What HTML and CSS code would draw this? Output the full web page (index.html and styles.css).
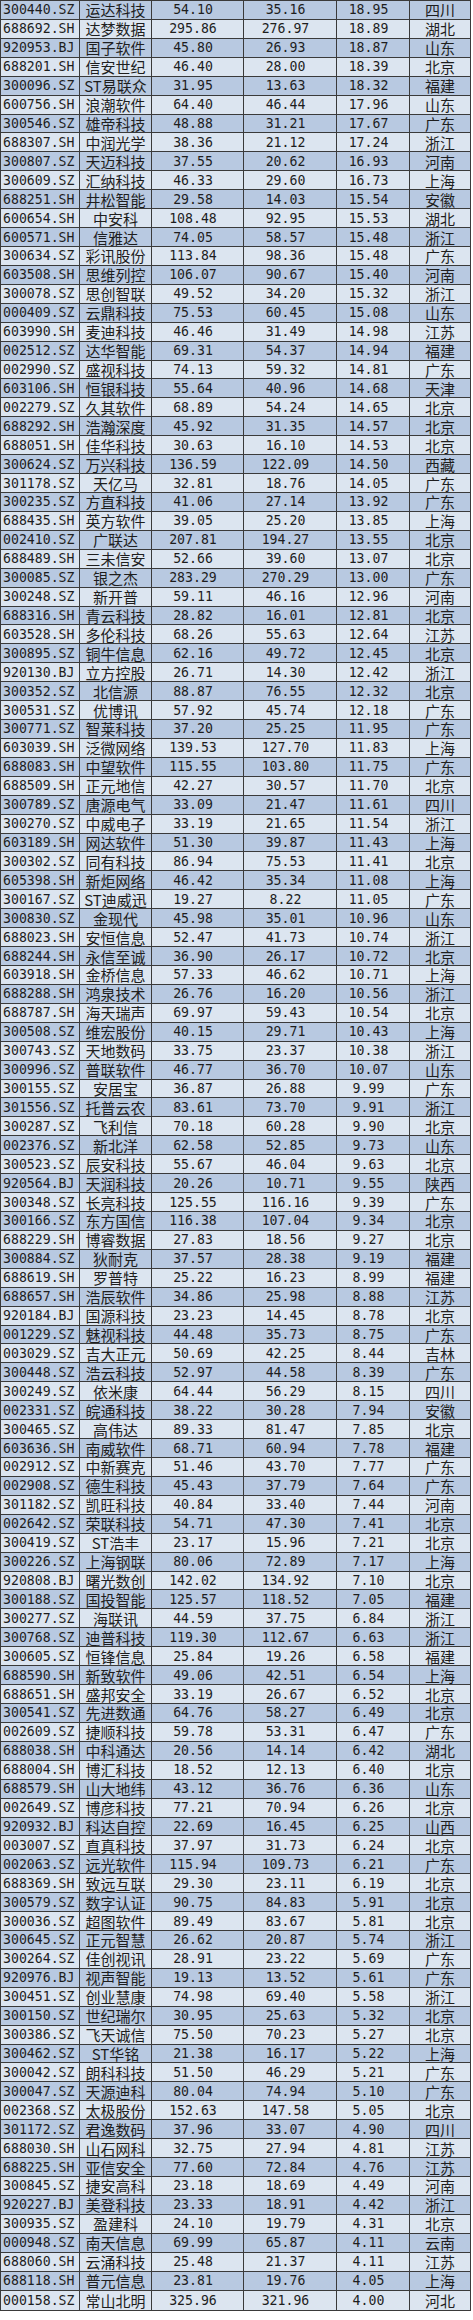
FILE: index.html
```html
<!DOCTYPE html>
<html lang="zh-CN">
<head>
<meta charset="utf-8">
<title>股票列表</title>
<link rel="stylesheet" href="styles.css">
</head>
<body>
<table class="sheet">
<colgroup>
<col class="c-code"><col class="c-name"><col class="c-a"><col class="c-b"><col class="c-c"><col class="c-prov">
</colgroup>
<tbody>
<tr><td class="code">300440.SZ</td><td class="name">运达科技</td><td class="num">54.10</td><td class="num">35.16</td><td class="num">18.95</td><td class="prov">四川</td></tr>
<tr><td class="code">688692.SH</td><td class="name">达梦数据</td><td class="num">295.86</td><td class="num">276.97</td><td class="num">18.89</td><td class="prov">湖北</td></tr>
<tr><td class="code">920953.BJ</td><td class="name">国子软件</td><td class="num">45.80</td><td class="num">26.93</td><td class="num">18.87</td><td class="prov">山东</td></tr>
<tr><td class="code">688201.SH</td><td class="name">信安世纪</td><td class="num">46.40</td><td class="num">28.00</td><td class="num">18.39</td><td class="prov">北京</td></tr>
<tr><td class="code">300096.SZ</td><td class="name">ST易联众</td><td class="num">31.95</td><td class="num">13.63</td><td class="num">18.32</td><td class="prov">福建</td></tr>
<tr><td class="code">600756.SH</td><td class="name">浪潮软件</td><td class="num">64.40</td><td class="num">46.44</td><td class="num">17.96</td><td class="prov">山东</td></tr>
<tr><td class="code">300546.SZ</td><td class="name">雄帝科技</td><td class="num">48.88</td><td class="num">31.21</td><td class="num">17.67</td><td class="prov">广东</td></tr>
<tr><td class="code">688307.SH</td><td class="name">中润光学</td><td class="num">38.36</td><td class="num">21.12</td><td class="num">17.24</td><td class="prov">浙江</td></tr>
<tr><td class="code">300807.SZ</td><td class="name">天迈科技</td><td class="num">37.55</td><td class="num">20.62</td><td class="num">16.93</td><td class="prov">河南</td></tr>
<tr><td class="code">300609.SZ</td><td class="name">汇纳科技</td><td class="num">46.33</td><td class="num">29.60</td><td class="num">16.73</td><td class="prov">上海</td></tr>
<tr><td class="code">688251.SH</td><td class="name">井松智能</td><td class="num">29.58</td><td class="num">14.03</td><td class="num">15.54</td><td class="prov">安徽</td></tr>
<tr><td class="code">600654.SH</td><td class="name">中安科</td><td class="num">108.48</td><td class="num">92.95</td><td class="num">15.53</td><td class="prov">湖北</td></tr>
<tr><td class="code">600571.SH</td><td class="name">信雅达</td><td class="num">74.05</td><td class="num">58.57</td><td class="num">15.48</td><td class="prov">浙江</td></tr>
<tr><td class="code">300634.SZ</td><td class="name">彩讯股份</td><td class="num">113.84</td><td class="num">98.36</td><td class="num">15.48</td><td class="prov">广东</td></tr>
<tr><td class="code">603508.SH</td><td class="name">思维列控</td><td class="num">106.07</td><td class="num">90.67</td><td class="num">15.40</td><td class="prov">河南</td></tr>
<tr><td class="code">300078.SZ</td><td class="name">思创智联</td><td class="num">49.52</td><td class="num">34.20</td><td class="num">15.32</td><td class="prov">浙江</td></tr>
<tr><td class="code">000409.SZ</td><td class="name">云鼎科技</td><td class="num">75.53</td><td class="num">60.45</td><td class="num">15.08</td><td class="prov">山东</td></tr>
<tr><td class="code">603990.SH</td><td class="name">麦迪科技</td><td class="num">46.46</td><td class="num">31.49</td><td class="num">14.98</td><td class="prov">江苏</td></tr>
<tr><td class="code">002512.SZ</td><td class="name">达华智能</td><td class="num">69.31</td><td class="num">54.37</td><td class="num">14.94</td><td class="prov">福建</td></tr>
<tr><td class="code">002990.SZ</td><td class="name">盛视科技</td><td class="num">74.13</td><td class="num">59.32</td><td class="num">14.81</td><td class="prov">广东</td></tr>
<tr><td class="code">603106.SH</td><td class="name">恒银科技</td><td class="num">55.64</td><td class="num">40.96</td><td class="num">14.68</td><td class="prov">天津</td></tr>
<tr><td class="code">002279.SZ</td><td class="name">久其软件</td><td class="num">68.89</td><td class="num">54.24</td><td class="num">14.65</td><td class="prov">北京</td></tr>
<tr><td class="code">688292.SH</td><td class="name">浩瀚深度</td><td class="num">45.92</td><td class="num">31.35</td><td class="num">14.57</td><td class="prov">北京</td></tr>
<tr><td class="code">688051.SH</td><td class="name">佳华科技</td><td class="num">30.63</td><td class="num">16.10</td><td class="num">14.53</td><td class="prov">北京</td></tr>
<tr><td class="code">300624.SZ</td><td class="name">万兴科技</td><td class="num">136.59</td><td class="num">122.09</td><td class="num">14.50</td><td class="prov">西藏</td></tr>
<tr><td class="code">301178.SZ</td><td class="name">天亿马</td><td class="num">32.81</td><td class="num">18.76</td><td class="num">14.05</td><td class="prov">广东</td></tr>
<tr><td class="code">300235.SZ</td><td class="name">方直科技</td><td class="num">41.06</td><td class="num">27.14</td><td class="num">13.92</td><td class="prov">广东</td></tr>
<tr><td class="code">688435.SH</td><td class="name">英方软件</td><td class="num">39.05</td><td class="num">25.20</td><td class="num">13.85</td><td class="prov">上海</td></tr>
<tr><td class="code">002410.SZ</td><td class="name">广联达</td><td class="num">207.81</td><td class="num">194.27</td><td class="num">13.55</td><td class="prov">北京</td></tr>
<tr><td class="code">688489.SH</td><td class="name">三未信安</td><td class="num">52.66</td><td class="num">39.60</td><td class="num">13.07</td><td class="prov">北京</td></tr>
<tr><td class="code">300085.SZ</td><td class="name">银之杰</td><td class="num">283.29</td><td class="num">270.29</td><td class="num">13.00</td><td class="prov">广东</td></tr>
<tr><td class="code">300248.SZ</td><td class="name">新开普</td><td class="num">59.11</td><td class="num">46.16</td><td class="num">12.96</td><td class="prov">河南</td></tr>
<tr><td class="code">688316.SH</td><td class="name">青云科技</td><td class="num">28.82</td><td class="num">16.01</td><td class="num">12.81</td><td class="prov">北京</td></tr>
<tr><td class="code">603528.SH</td><td class="name">多伦科技</td><td class="num">68.26</td><td class="num">55.63</td><td class="num">12.64</td><td class="prov">江苏</td></tr>
<tr><td class="code">300895.SZ</td><td class="name">铜牛信息</td><td class="num">62.16</td><td class="num">49.72</td><td class="num">12.45</td><td class="prov">北京</td></tr>
<tr><td class="code">920130.BJ</td><td class="name">立方控股</td><td class="num">26.71</td><td class="num">14.30</td><td class="num">12.42</td><td class="prov">浙江</td></tr>
<tr><td class="code">300352.SZ</td><td class="name">北信源</td><td class="num">88.87</td><td class="num">76.55</td><td class="num">12.32</td><td class="prov">北京</td></tr>
<tr><td class="code">300531.SZ</td><td class="name">优博讯</td><td class="num">57.92</td><td class="num">45.74</td><td class="num">12.18</td><td class="prov">广东</td></tr>
<tr><td class="code">300771.SZ</td><td class="name">智莱科技</td><td class="num">37.20</td><td class="num">25.25</td><td class="num">11.95</td><td class="prov">广东</td></tr>
<tr><td class="code">603039.SH</td><td class="name">泛微网络</td><td class="num">139.53</td><td class="num">127.70</td><td class="num">11.83</td><td class="prov">上海</td></tr>
<tr><td class="code">688083.SH</td><td class="name">中望软件</td><td class="num">115.55</td><td class="num">103.80</td><td class="num">11.75</td><td class="prov">广东</td></tr>
<tr><td class="code">688509.SH</td><td class="name">正元地信</td><td class="num">42.27</td><td class="num">30.57</td><td class="num">11.70</td><td class="prov">北京</td></tr>
<tr><td class="code">300789.SZ</td><td class="name">唐源电气</td><td class="num">33.09</td><td class="num">21.47</td><td class="num">11.61</td><td class="prov">四川</td></tr>
<tr><td class="code">300270.SZ</td><td class="name">中威电子</td><td class="num">33.19</td><td class="num">21.65</td><td class="num">11.54</td><td class="prov">浙江</td></tr>
<tr><td class="code">603189.SH</td><td class="name">网达软件</td><td class="num">51.30</td><td class="num">39.87</td><td class="num">11.43</td><td class="prov">上海</td></tr>
<tr><td class="code">300302.SZ</td><td class="name">同有科技</td><td class="num">86.94</td><td class="num">75.53</td><td class="num">11.41</td><td class="prov">北京</td></tr>
<tr><td class="code">605398.SH</td><td class="name">新炬网络</td><td class="num">46.42</td><td class="num">35.34</td><td class="num">11.08</td><td class="prov">上海</td></tr>
<tr><td class="code">300167.SZ</td><td class="name">ST迪威迅</td><td class="num">19.27</td><td class="num">8.22</td><td class="num">11.05</td><td class="prov">广东</td></tr>
<tr><td class="code">300830.SZ</td><td class="name">金现代</td><td class="num">45.98</td><td class="num">35.01</td><td class="num">10.96</td><td class="prov">山东</td></tr>
<tr><td class="code">688023.SH</td><td class="name">安恒信息</td><td class="num">52.47</td><td class="num">41.73</td><td class="num">10.74</td><td class="prov">浙江</td></tr>
<tr><td class="code">688244.SH</td><td class="name">永信至诚</td><td class="num">36.90</td><td class="num">26.17</td><td class="num">10.72</td><td class="prov">北京</td></tr>
<tr><td class="code">603918.SH</td><td class="name">金桥信息</td><td class="num">57.33</td><td class="num">46.62</td><td class="num">10.71</td><td class="prov">上海</td></tr>
<tr><td class="code">688288.SH</td><td class="name">鸿泉技术</td><td class="num">26.76</td><td class="num">16.20</td><td class="num">10.56</td><td class="prov">浙江</td></tr>
<tr><td class="code">688787.SH</td><td class="name">海天瑞声</td><td class="num">69.97</td><td class="num">59.43</td><td class="num">10.54</td><td class="prov">北京</td></tr>
<tr><td class="code">300508.SZ</td><td class="name">维宏股份</td><td class="num">40.15</td><td class="num">29.71</td><td class="num">10.43</td><td class="prov">上海</td></tr>
<tr><td class="code">300743.SZ</td><td class="name">天地数码</td><td class="num">33.75</td><td class="num">23.37</td><td class="num">10.38</td><td class="prov">浙江</td></tr>
<tr><td class="code">300996.SZ</td><td class="name">普联软件</td><td class="num">46.77</td><td class="num">36.70</td><td class="num">10.07</td><td class="prov">山东</td></tr>
<tr><td class="code">300155.SZ</td><td class="name">安居宝</td><td class="num">36.87</td><td class="num">26.88</td><td class="num">9.99</td><td class="prov">广东</td></tr>
<tr><td class="code">301556.SZ</td><td class="name">托普云农</td><td class="num">83.61</td><td class="num">73.70</td><td class="num">9.91</td><td class="prov">浙江</td></tr>
<tr><td class="code">300287.SZ</td><td class="name">飞利信</td><td class="num">70.18</td><td class="num">60.28</td><td class="num">9.90</td><td class="prov">北京</td></tr>
<tr><td class="code">002376.SZ</td><td class="name">新北洋</td><td class="num">62.58</td><td class="num">52.85</td><td class="num">9.73</td><td class="prov">山东</td></tr>
<tr><td class="code">300523.SZ</td><td class="name">辰安科技</td><td class="num">55.67</td><td class="num">46.04</td><td class="num">9.63</td><td class="prov">北京</td></tr>
<tr><td class="code">920564.BJ</td><td class="name">天润科技</td><td class="num">20.26</td><td class="num">10.71</td><td class="num">9.55</td><td class="prov">陕西</td></tr>
<tr><td class="code">300348.SZ</td><td class="name">长亮科技</td><td class="num">125.55</td><td class="num">116.16</td><td class="num">9.39</td><td class="prov">广东</td></tr>
<tr><td class="code">300166.SZ</td><td class="name">东方国信</td><td class="num">116.38</td><td class="num">107.04</td><td class="num">9.34</td><td class="prov">北京</td></tr>
<tr><td class="code">688229.SH</td><td class="name">博睿数据</td><td class="num">27.83</td><td class="num">18.56</td><td class="num">9.27</td><td class="prov">北京</td></tr>
<tr><td class="code">300884.SZ</td><td class="name">狄耐克</td><td class="num">37.57</td><td class="num">28.38</td><td class="num">9.19</td><td class="prov">福建</td></tr>
<tr><td class="code">688619.SH</td><td class="name">罗普特</td><td class="num">25.22</td><td class="num">16.23</td><td class="num">8.99</td><td class="prov">福建</td></tr>
<tr><td class="code">688657.SH</td><td class="name">浩辰软件</td><td class="num">34.86</td><td class="num">25.98</td><td class="num">8.88</td><td class="prov">江苏</td></tr>
<tr><td class="code">920184.BJ</td><td class="name">国源科技</td><td class="num">23.23</td><td class="num">14.45</td><td class="num">8.78</td><td class="prov">北京</td></tr>
<tr><td class="code">001229.SZ</td><td class="name">魅视科技</td><td class="num">44.48</td><td class="num">35.73</td><td class="num">8.75</td><td class="prov">广东</td></tr>
<tr><td class="code">003029.SZ</td><td class="name">吉大正元</td><td class="num">50.69</td><td class="num">42.25</td><td class="num">8.44</td><td class="prov">吉林</td></tr>
<tr><td class="code">300448.SZ</td><td class="name">浩云科技</td><td class="num">52.97</td><td class="num">44.58</td><td class="num">8.39</td><td class="prov">广东</td></tr>
<tr><td class="code">300249.SZ</td><td class="name">依米康</td><td class="num">64.44</td><td class="num">56.29</td><td class="num">8.15</td><td class="prov">四川</td></tr>
<tr><td class="code">002331.SZ</td><td class="name">皖通科技</td><td class="num">38.22</td><td class="num">30.28</td><td class="num">7.94</td><td class="prov">安徽</td></tr>
<tr><td class="code">300465.SZ</td><td class="name">高伟达</td><td class="num">89.33</td><td class="num">81.47</td><td class="num">7.85</td><td class="prov">北京</td></tr>
<tr><td class="code">603636.SH</td><td class="name">南威软件</td><td class="num">68.71</td><td class="num">60.94</td><td class="num">7.78</td><td class="prov">福建</td></tr>
<tr><td class="code">002912.SZ</td><td class="name">中新赛克</td><td class="num">51.46</td><td class="num">43.70</td><td class="num">7.77</td><td class="prov">广东</td></tr>
<tr><td class="code">002908.SZ</td><td class="name">德生科技</td><td class="num">45.43</td><td class="num">37.79</td><td class="num">7.64</td><td class="prov">广东</td></tr>
<tr><td class="code">301182.SZ</td><td class="name">凯旺科技</td><td class="num">40.84</td><td class="num">33.40</td><td class="num">7.44</td><td class="prov">河南</td></tr>
<tr><td class="code">002642.SZ</td><td class="name">荣联科技</td><td class="num">54.71</td><td class="num">47.30</td><td class="num">7.41</td><td class="prov">北京</td></tr>
<tr><td class="code">300419.SZ</td><td class="name">ST浩丰</td><td class="num">23.17</td><td class="num">15.96</td><td class="num">7.21</td><td class="prov">北京</td></tr>
<tr><td class="code">300226.SZ</td><td class="name">上海钢联</td><td class="num">80.06</td><td class="num">72.89</td><td class="num">7.17</td><td class="prov">上海</td></tr>
<tr><td class="code">920808.BJ</td><td class="name">曙光数创</td><td class="num">142.02</td><td class="num">134.92</td><td class="num">7.10</td><td class="prov">北京</td></tr>
<tr><td class="code">300188.SZ</td><td class="name">国投智能</td><td class="num">125.57</td><td class="num">118.52</td><td class="num">7.05</td><td class="prov">福建</td></tr>
<tr><td class="code">300277.SZ</td><td class="name">海联讯</td><td class="num">44.59</td><td class="num">37.75</td><td class="num">6.84</td><td class="prov">浙江</td></tr>
<tr><td class="code">300768.SZ</td><td class="name">迪普科技</td><td class="num">119.30</td><td class="num">112.67</td><td class="num">6.63</td><td class="prov">浙江</td></tr>
<tr><td class="code">300605.SZ</td><td class="name">恒锋信息</td><td class="num">25.84</td><td class="num">19.26</td><td class="num">6.58</td><td class="prov">福建</td></tr>
<tr><td class="code">688590.SH</td><td class="name">新致软件</td><td class="num">49.06</td><td class="num">42.51</td><td class="num">6.54</td><td class="prov">上海</td></tr>
<tr><td class="code">688651.SH</td><td class="name">盛邦安全</td><td class="num">33.19</td><td class="num">26.67</td><td class="num">6.52</td><td class="prov">北京</td></tr>
<tr><td class="code">300541.SZ</td><td class="name">先进数通</td><td class="num">64.76</td><td class="num">58.27</td><td class="num">6.49</td><td class="prov">北京</td></tr>
<tr><td class="code">002609.SZ</td><td class="name">捷顺科技</td><td class="num">59.78</td><td class="num">53.31</td><td class="num">6.47</td><td class="prov">广东</td></tr>
<tr><td class="code">688038.SH</td><td class="name">中科通达</td><td class="num">20.56</td><td class="num">14.14</td><td class="num">6.42</td><td class="prov">湖北</td></tr>
<tr><td class="code">688004.SH</td><td class="name">博汇科技</td><td class="num">18.52</td><td class="num">12.13</td><td class="num">6.40</td><td class="prov">北京</td></tr>
<tr><td class="code">688579.SH</td><td class="name">山大地纬</td><td class="num">43.12</td><td class="num">36.76</td><td class="num">6.36</td><td class="prov">山东</td></tr>
<tr><td class="code">002649.SZ</td><td class="name">博彦科技</td><td class="num">77.21</td><td class="num">70.94</td><td class="num">6.26</td><td class="prov">北京</td></tr>
<tr><td class="code">920932.BJ</td><td class="name">科达自控</td><td class="num">22.69</td><td class="num">16.45</td><td class="num">6.25</td><td class="prov">山西</td></tr>
<tr><td class="code">003007.SZ</td><td class="name">直真科技</td><td class="num">37.97</td><td class="num">31.73</td><td class="num">6.24</td><td class="prov">北京</td></tr>
<tr><td class="code">002063.SZ</td><td class="name">远光软件</td><td class="num">115.94</td><td class="num">109.73</td><td class="num">6.21</td><td class="prov">广东</td></tr>
<tr><td class="code">688369.SH</td><td class="name">致远互联</td><td class="num">29.30</td><td class="num">23.11</td><td class="num">6.19</td><td class="prov">北京</td></tr>
<tr><td class="code">300579.SZ</td><td class="name">数字认证</td><td class="num">90.75</td><td class="num">84.83</td><td class="num">5.91</td><td class="prov">北京</td></tr>
<tr><td class="code">300036.SZ</td><td class="name">超图软件</td><td class="num">89.49</td><td class="num">83.67</td><td class="num">5.81</td><td class="prov">北京</td></tr>
<tr><td class="code">300645.SZ</td><td class="name">正元智慧</td><td class="num">26.62</td><td class="num">20.87</td><td class="num">5.74</td><td class="prov">浙江</td></tr>
<tr><td class="code">300264.SZ</td><td class="name">佳创视讯</td><td class="num">28.91</td><td class="num">23.22</td><td class="num">5.69</td><td class="prov">广东</td></tr>
<tr><td class="code">920976.BJ</td><td class="name">视声智能</td><td class="num">19.13</td><td class="num">13.52</td><td class="num">5.61</td><td class="prov">广东</td></tr>
<tr><td class="code">300451.SZ</td><td class="name">创业慧康</td><td class="num">74.98</td><td class="num">69.40</td><td class="num">5.58</td><td class="prov">浙江</td></tr>
<tr><td class="code">300150.SZ</td><td class="name">世纪瑞尔</td><td class="num">30.95</td><td class="num">25.63</td><td class="num">5.32</td><td class="prov">北京</td></tr>
<tr><td class="code">300386.SZ</td><td class="name">飞天诚信</td><td class="num">75.50</td><td class="num">70.23</td><td class="num">5.27</td><td class="prov">北京</td></tr>
<tr><td class="code">300462.SZ</td><td class="name">ST华铭</td><td class="num">21.38</td><td class="num">16.17</td><td class="num">5.22</td><td class="prov">上海</td></tr>
<tr><td class="code">300042.SZ</td><td class="name">朗科科技</td><td class="num">51.50</td><td class="num">46.29</td><td class="num">5.21</td><td class="prov">广东</td></tr>
<tr><td class="code">300047.SZ</td><td class="name">天源迪科</td><td class="num">80.04</td><td class="num">74.94</td><td class="num">5.10</td><td class="prov">广东</td></tr>
<tr><td class="code">002368.SZ</td><td class="name">太极股份</td><td class="num">152.63</td><td class="num">147.58</td><td class="num">5.05</td><td class="prov">北京</td></tr>
<tr><td class="code">301172.SZ</td><td class="name">君逸数码</td><td class="num">37.96</td><td class="num">33.07</td><td class="num">4.90</td><td class="prov">四川</td></tr>
<tr><td class="code">688030.SH</td><td class="name">山石网科</td><td class="num">32.75</td><td class="num">27.94</td><td class="num">4.81</td><td class="prov">江苏</td></tr>
<tr><td class="code">688225.SH</td><td class="name">亚信安全</td><td class="num">77.60</td><td class="num">72.84</td><td class="num">4.76</td><td class="prov">江苏</td></tr>
<tr><td class="code">300845.SZ</td><td class="name">捷安高科</td><td class="num">23.18</td><td class="num">18.69</td><td class="num">4.49</td><td class="prov">河南</td></tr>
<tr><td class="code">920227.BJ</td><td class="name">美登科技</td><td class="num">23.33</td><td class="num">18.91</td><td class="num">4.42</td><td class="prov">浙江</td></tr>
<tr><td class="code">300935.SZ</td><td class="name">盈建科</td><td class="num">24.10</td><td class="num">19.79</td><td class="num">4.31</td><td class="prov">北京</td></tr>
<tr><td class="code">000948.SZ</td><td class="name">南天信息</td><td class="num">69.99</td><td class="num">65.87</td><td class="num">4.11</td><td class="prov">云南</td></tr>
<tr><td class="code">688060.SH</td><td class="name">云涌科技</td><td class="num">25.48</td><td class="num">21.37</td><td class="num">4.11</td><td class="prov">江苏</td></tr>
<tr><td class="code">688118.SH</td><td class="name">普元信息</td><td class="num">23.81</td><td class="num">19.76</td><td class="num">4.05</td><td class="prov">上海</td></tr>
<tr><td class="code">000158.SZ</td><td class="name">常山北明</td><td class="num">325.96</td><td class="num">321.96</td><td class="num">4.00</td><td class="prov">河北</td></tr>
</tbody>
</table>
</body>
</html>
```

FILE: styles.css
```css
html, body {
  margin: 0;
  padding: 0;
  background: #ffffff;
}

.sheet {
  border-collapse: collapse;
  table-layout: fixed;
  width: 471px;
  height: 2311px;
  color: #1e1e1e;
  border: 1px solid #3a3a3a;
}

.c-code { width: 79px; }
.c-name { width: 72px; }
.c-a { width: 92px; }
.c-b { width: 93px; }
.c-c { width: 73px; }
.c-prov { width: 61px; }

.sheet tr {
  height: 18.9px;
}

.sheet tr:nth-child(odd) {
  background: #b8c9e1;
}

.sheet tr:nth-child(even) {
  background: #dce5f0;
}

.sheet td {
  border: 1px solid #3a3a3a;
  padding: 1px 0 0 0;
  line-height: 16px;
  white-space: nowrap;
  vertical-align: middle;
}

.code {
  font-family: "DejaVu Sans Mono", "Liberation Mono", monospace;
  font-size: 13.2px;
  text-align: left;
  padding-left: 2px !important;
}

.num {
  font-family: "DejaVu Sans Mono", "Liberation Mono", monospace;
  font-size: 13.2px;
  text-align: center;
  padding-right: 9px !important;
}

.name,
.prov {
  font-family: "Noto Sans CJK SC", "DejaVu Sans", sans-serif;
  font-size: 15px;
  text-align: center;
}
```
